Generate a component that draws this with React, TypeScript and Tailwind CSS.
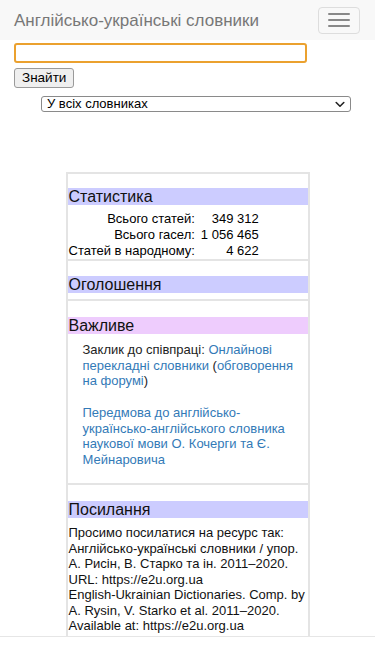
import React from "react";

const font = { fontFamily: '"Liberation Sans", Arial, Helvetica, sans-serif' };

// Section header bar (Статистика, Оголошення ...)
const Bar = ({ title, tone = "blue" }: { title: string; tone?: "blue" | "pink" }) => (
  <div
    className={`h-[17px] pl-[1px] text-[16px] leading-[17px] text-[#111] ${
      tone === "pink" ? "bg-[#eeccfd]" : "bg-[#ccccff]"
    }`}
  >
    {title}
  </div>
);

const Divider = () => <div className="h-[2px] bg-[#e4e4e4]" />;

const stats = [
  { label: "Всього статей:", value: "349 312" },
  { label: "Всього гасел:", value: "1 056 465" },
  { label: "Статей в народному:", value: "4 622" },
];

export default function App() {
  return (
    <div className="min-h-[667px] bg-white text-black" style={font}>
      {/* Navbar */}
      <div className="flex h-[40px] items-center justify-between bg-[#f8f8f8] pl-[14px] pr-[15px]">
        <span className="text-[17px] leading-none text-[#777]">Англійсько-українські словники</span>
        <button className="flex h-[27px] w-[42px] flex-col items-center justify-center gap-[4px] rounded-[4px] border border-[#dddddd] bg-[#f8f8f8]">
          <span className="block h-[2px] w-[22px] rounded-[1px] bg-[#888]" />
          <span className="block h-[2px] w-[22px] rounded-[1px] bg-[#888]" />
          <span className="block h-[2px] w-[22px] rounded-[1px] bg-[#888]" />
        </button>
      </div>

      {/* Search form */}
      <div className="flex flex-col items-start px-[14px] pt-[3px]">
        <input
          type="text"
          className="h-[20px] w-[293px] rounded-[3px] border-2 border-[#eba12f] bg-white px-1 text-[13px] outline-none"
        />
        <button className="mt-[5px] h-[20px] rounded-[3px] border border-[#9a9a9a] bg-[#efefef] px-[7px] text-[13.5px] leading-[18px] text-black">
          Знайти
        </button>
        <div className="ml-[27px] mt-[8px] flex h-[16px] w-[310px] items-center justify-between rounded-[3px] border border-[#8a8a8a] bg-white pl-[5px] pr-[5px]">
          <span className="text-[13px] leading-[14px] text-black">У всіх словниках</span>
          <svg width="10" height="7" viewBox="0 0 10 7">
            <path d="M1.2 1.5 L5 5.2 L8.8 1.5" fill="none" stroke="#222" strokeWidth="1.6" strokeLinecap="round" strokeLinejoin="round" />
          </svg>
        </div>
      </div>

      {/* Side panel */}
      <div className="mx-auto mt-[60px] w-[244px] border-x-2 border-[#e4e4e4] text-[13px]">
        <Divider />
        <div className="pt-[14px]">
          <Bar title="Статистика" />
          <div className="mt-[6px] grid grid-cols-[auto_auto] justify-start gap-x-[6px] pl-[1px] leading-[16px]">
            {stats.map((s) => (
              <React.Fragment key={s.label}>
                <span className="text-right">{s.label}</span>
                <span className="text-right">{s.value}</span>
              </React.Fragment>
            ))}
          </div>
        </div>
        <Divider />
        <div className="pb-[6px] pt-[15px]">
          <Bar title="Оголошення" />
        </div>
        <Divider />
        <div className="pb-[16px] pt-[16px]">
          <Bar title="Важливе" tone="pink" />
          <div className="mt-[8px] pl-[15px] pr-[10px] leading-[15.5px] text-[#222]">
            <p>
              Заклик до співпраці:{" "}
              <a className="text-[#337ab7]" href="#">
                Онлайнові перекладні словники
              </a>{" "}
              (
              <a className="text-[#337ab7]" href="#">
                обговорення на форумі
              </a>
              )
            </p>
            <p className="mt-[16.5px]">
              <a className="text-[#337ab7]" href="#">
                Передмова до англійсько-українсько-англійського словника наукової мови О. Кочерги та Є. Мейнаровича
              </a>
            </p>
          </div>
        </div>
        <Divider />
        <div className="pt-[16px]">
          <Bar title="Посилання" />
          <div className="mt-[7px] pb-[2px] pl-[1px] leading-[15.5px] text-[#111]">
            <p>
              Просимо посилатися на ресурс так: Англійсько-українські словники / упор. А. Рисін, В. Старко та ін.
              2011–2020. URL: https://e2u.org.ua
            </p>
            <p>
              English-Ukrainian Dictionaries. Comp. by A. Rysin, V. Starko et al. 2011–2020. Available at:
              https://e2u.org.ua
            </p>
          </div>
        </div>
      </div>
      <div className="h-[1px] bg-[#e6e6e6]" />
    </div>
  );
}
